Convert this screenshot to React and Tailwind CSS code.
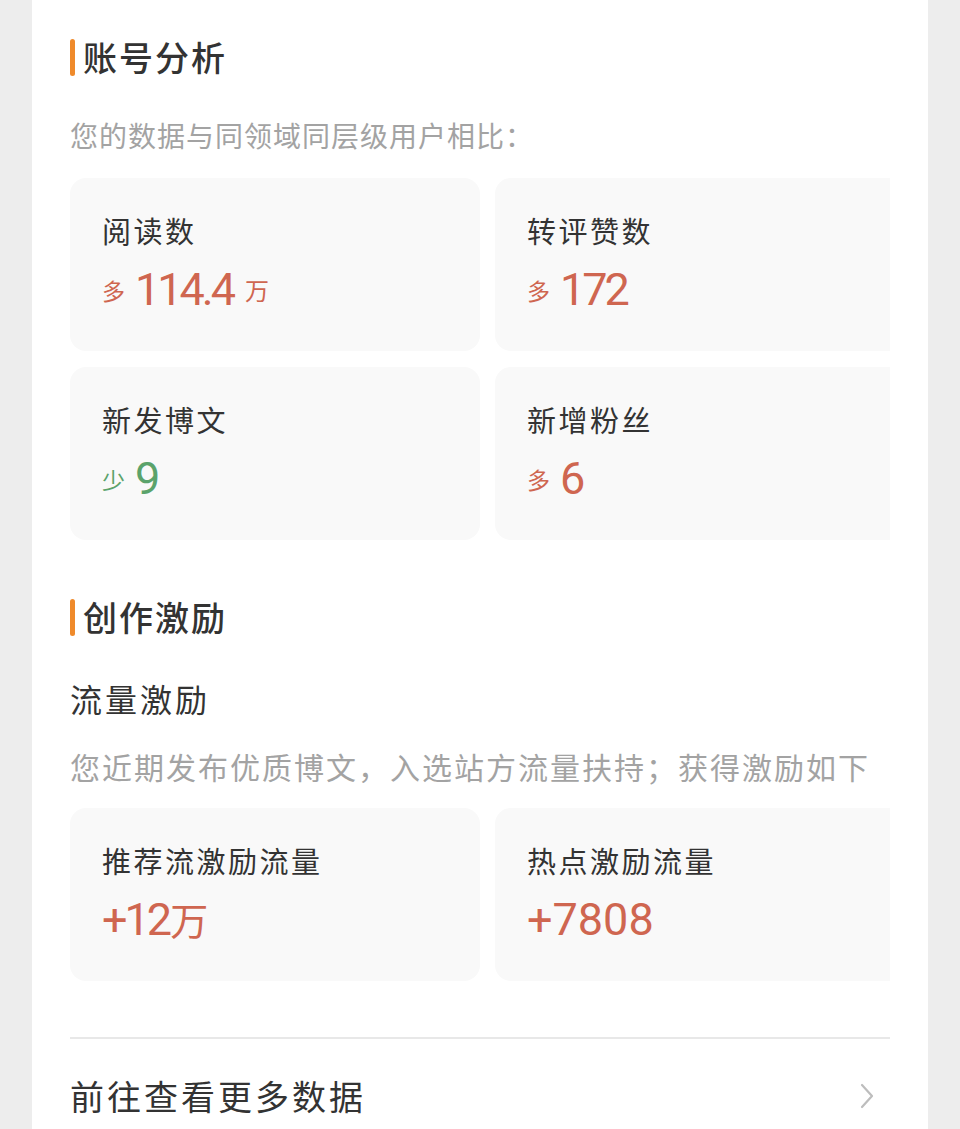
import React from "react";

const CJK = { fontFamily: '"Noto Sans CJK SC", "Noto Sans", sans-serif' };
const NUM = { fontFamily: 'Roboto, "Noto Sans CJK SC", sans-serif' };

function StatCard({ label, prefix, value, suffix, tone, tight, unit }) {
  const color = tone === "green" ? "text-[#5ba36b]" : "text-[#cf6650]";
  return (
    <div className="h-[173px] rounded-[16px] bg-[#f9f9f9] pl-[32px] pt-[32px]">
      <div className="text-[29px] leading-[40px] tracking-[2.5px] text-[#333333]" style={CJK}>
        {label}
      </div>
      <div className={`mt-[14px] flex h-[50px] items-center ${color}`}>
        {prefix && (
          <span className="mr-[10px] mt-[2px] text-[23px] leading-none" style={CJK}>
            {prefix}
          </span>
        )}
        <span
          className={`text-[45px] leading-none ${tight ? "tracking-[-3px]" : "tracking-[0px]"}`}
          style={NUM}
        >
          {value}
        </span>
        {unit && (
          <span className="ml-[1px] text-[38px] leading-none" style={CJK}>
            {unit}
          </span>
        )}
        {suffix && (
          <span className="ml-[12px] mt-[2px] text-[24px] leading-none" style={CJK}>
            {suffix}
          </span>
        )}
      </div>
    </div>
  );
}

function SectionTitle({ children }) {
  return (
    <div className="flex items-center">
      <div className="h-[37px] w-[5px] rounded-full bg-[#ef8a2b]" />
      <div
        className="ml-[8px] text-[34px] font-medium leading-[40px] tracking-[2px] text-[#333333]"
        style={CJK}
      >
        {children}
      </div>
    </div>
  );
}

export default function App() {
  return (
    <div className="min-h-screen bg-[#ededed] px-[32px]" style={CJK}>
      <div className="min-h-[1129px] bg-white px-[38px] pt-[37px] pb-[40px]">
        <SectionTitle>账号分析</SectionTitle>
        <div className="mt-[38px] text-[28px] leading-[40px] tracking-[1px] text-[#a3a3a3]">
          您的数据与同领域同层级用户相比：
        </div>

        <div className="mt-[23px] w-[820px] overflow-hidden">
          <div className="grid grid-cols-[410px_410px] gap-x-[15px] gap-y-[16px]">
            <StatCard label="阅读数" prefix="多" value="114.4" suffix="万" tight />
            <StatCard label="转评赞数" prefix="多" value="172" tight />
            <StatCard label="新发博文" prefix="少" value="9" tone="green" />
            <StatCard label="新增粉丝" prefix="多" value="6" />
          </div>
        </div>

        <div className="mt-[57px]">
          <SectionTitle>创作激励</SectionTitle>
        </div>
        <div className="mt-[41px] text-[32px] leading-[40px] tracking-[3px] text-[#333333]">
          流量激励
        </div>
        <div className="mt-[28px] whitespace-nowrap text-[30px] leading-[40px] tracking-[2px] text-[#a3a3a3]">
          您近期发布优质博文，入选站方流量扶持；获得激励如下
        </div>

        <div className="mt-[22px] w-[820px] overflow-hidden">
          <div className="grid grid-cols-[410px_410px] gap-x-[15px]">
            <StatCard label="推荐流激励流量" value="+12" unit="万" tight />
            <StatCard label="热点激励流量" value="+7808" />
          </div>
        </div>

        <div className="mt-[56px] h-[2px] w-[820px] bg-[#e8e8e8]" />

        <div className="mt-[35px] flex h-[44px] w-[820px] items-center justify-between">
          <span className="text-[34px] leading-[44px] tracking-[3px] text-[#333333]">
            前往查看更多数据
          </span>
          <svg width="14" height="26" viewBox="0 0 14 26" className="mr-[16px]">
            <path d="M2 2 L12 13 L2 24" fill="none" stroke="#bdbdbd" strokeWidth="2.2" strokeLinecap="round" strokeLinejoin="round" />
          </svg>
        </div>
      </div>
    </div>
  );
}
